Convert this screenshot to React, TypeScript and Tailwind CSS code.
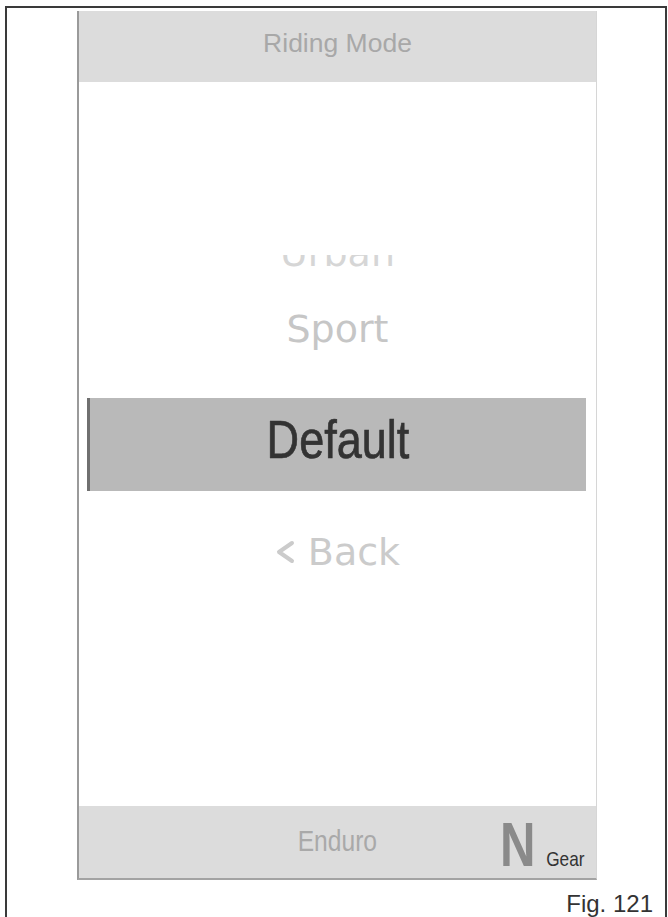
const narrow = "font-['Liberation_Sans',Arial,sans-serif]";
const wide = "font-['DejaVu_Sans','Open_Sans',sans-serif]";

function Chevron() {
  return (
    <svg width="20" height="24" viewBox="0 0 20 24" className="mr-[13px]">
      <polyline
        points="17,3 4,12 17,21"
        fill="none"
        stroke="#cbcbcb"
        strokeWidth="4"
        strokeLinecap="round"
        strokeLinejoin="round"
      />
    </svg>
  );
}

export default function App() {
  return (
    <div className="min-h-[917px] bg-white pl-[5px] pt-[6px]">
      <div className="h-[911px] w-[662px] border-x-2 border-t-2 border-[#3a3a3a] pl-[70px] pt-[3px]">
        <div className="flex h-[869px] w-[520px] flex-col border-b-2 border-l-2 border-r border-b-[#a3a3a3] border-l-[#9a9a9a] border-r-[#d6d6d6]">
          <header className="flex h-[71px] items-center justify-center bg-[#dcdcdc] pb-[7px]">
            <span className={`${narrow} inline-block text-[26.5px] leading-none text-[#a8a8a8]`}>
              Riding Mode
            </span>
          </header>

          <section className={`flex flex-1 flex-col pt-[173px] ${wide}`}>
            <div className="h-[12px] overflow-hidden text-center">
              <div className="-mt-[21px] text-[38px] leading-[38px] text-[#d6d6d6]">Urban</div>
            </div>
            <div className="mt-[43px] text-center text-[38px] leading-[38px] text-[#c6c6c6]">Sport</div>
            <div className="mt-[50px] ml-[8px] mr-[10px] flex h-[93px] items-center justify-center border-l-[3px] border-[#707070] bg-[#b9b9b9] pb-[11px]">
              <span
                className={`${narrow} inline-block scale-x-[0.85] text-[53px] leading-none text-[#333333] [-webkit-text-stroke:0.7px_#333333]`}
              >
                Default
              </span>
            </div>
            <div className="mt-[42px] flex items-center justify-center text-[38px] leading-[38px] text-[#cbcbcb]">
              <Chevron />
              <span>Back</span>
            </div>
          </section>

          <footer className={`grid h-[72px] grid-cols-3 items-center bg-[#dcdcdc] ${narrow}`}>
            <div />
            <div className="text-center">
              <span className="inline-block scale-x-[0.82] text-[30px] leading-none text-[#a9a9a9]">Enduro</span>
            </div>
            <div className="flex items-baseline justify-end pr-[7px] pt-[4px]">
              <span className="inline-block scale-x-[0.78] text-[63px] font-bold leading-none text-[#8a8a8a]">N</span>
              <span className="ml-[2px] inline-block scale-x-[0.82] text-[21px] leading-none text-[#333333]">Gear</span>
            </div>
          </footer>
        </div>

        <div className="mt-[12px] pr-[12px] text-right font-['Liberation_Sans',Arial,sans-serif] text-[24px] leading-none text-[#333333]">
          Fig. 121
        </div>
      </div>
    </div>
  );
}
